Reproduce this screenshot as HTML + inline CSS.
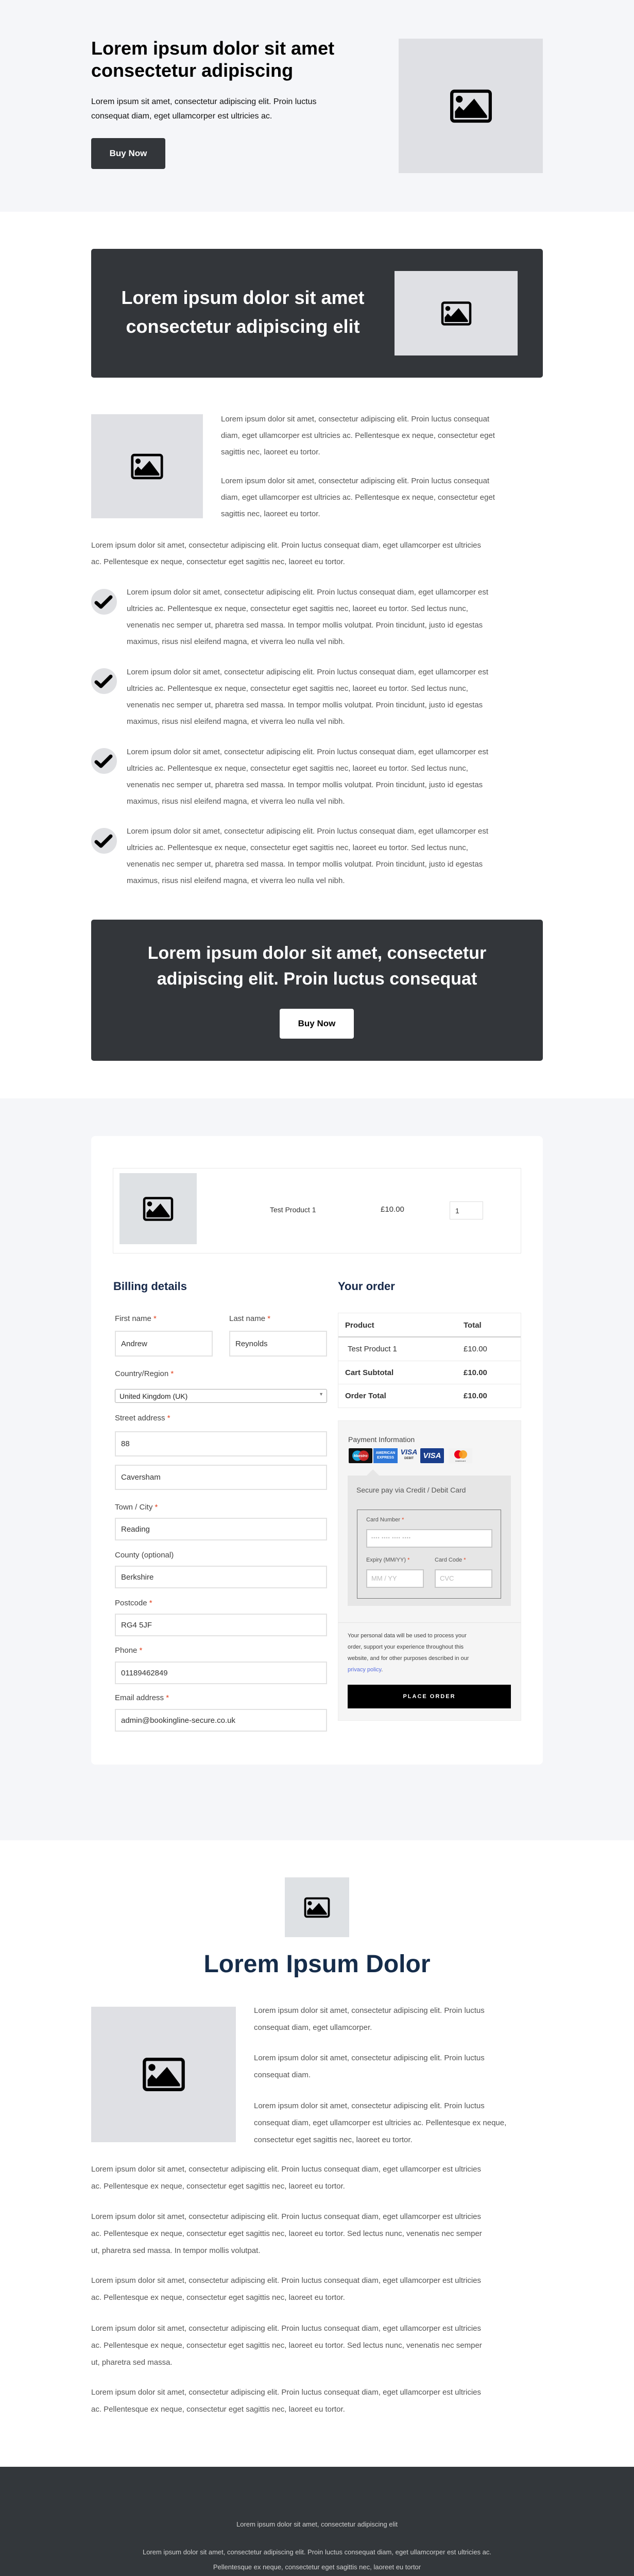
<!DOCTYPE html>
<html><head><meta charset="utf-8"><style>
*{margin:0;padding:0;box-sizing:border-box}
html{width:1231px;height:5262px;overflow:hidden}
body{width:1231px;height:5262px;position:relative;background:#fff;font-family:"Liberation Sans",sans-serif;color:#555;overflow:hidden}
.a{position:absolute}
.img{position:absolute;background:#dfe0e4;display:flex;align-items:center;justify-content:center}
.p{font-size:15px;line-height:32px;color:#555;white-space:nowrap}
.chk{position:absolute;left:177px;width:50px;height:50px;border-radius:50%;background:#dfe0e3}
.lbl{position:absolute;left:223px;font-size:15px;color:#444}
.lbl b,.sl b{color:#e2401c;font-weight:normal}
.inp{position:absolute;left:223px;width:412px;height:44px;border:2px solid #e2e2e2;background:#fff;font-size:15px;color:#333;padding:12px 10px}
.foot{position:absolute;left:0;width:1231px;text-align:center;font-size:13px;color:#d0d0d0}
.nav{color:#17294a}
</style></head><body>
<div class="a" style="left:0;top:0;width:1231px;height:411px;background:#f5f6f9"></div>
<div class="a" style="left:177px;top:72px;font-size:36px;line-height:43px;font-weight:bold;color:#000">Lorem ipsum dolor sit amet<br>consectetur adipiscing</div>
<div class="a" style="left:177px;top:184px;font-size:16px;line-height:28px;color:#111">Lorem ipsum sit amet, consectetur adipiscing elit. Proin luctus<br>consequat diam, eget ullamcorper est ultricies ac.</div>
<div class="a" style="left:177px;top:268px;width:144px;height:60px;background:#33363a;border-radius:4px;color:#fff;font-weight:bold;font-size:17px;line-height:60px;text-align:center">Buy Now</div>
<div class="img" style="left:774px;top:75px;width:280px;height:261px"><svg width="83" height="68" viewBox="0 0 40 32"><rect x="2" y="2" width="36" height="28" rx="2.5" fill="none" stroke="#000" stroke-width="3"/><circle cx="9" cy="9.5" r="3.2"/><path d="M5 27V21L9 16L13 20L23 9L35 25V27Z"/></svg></div>

<div class="a" style="left:177px;top:483px;width:877px;height:250px;background:#33363a;border-radius:5px"></div>
<div class="a" style="left:177px;top:550px;width:589px;text-align:center;font-size:36px;line-height:56px;font-weight:bold;color:#fff">Lorem ipsum dolor sit amet<br>consectetur adipiscing elit</div>
<div class="img" style="left:766px;top:526px;width:239px;height:164px"><svg width="60" height="49" viewBox="0 0 40 32"><rect x="2" y="2" width="36" height="28" rx="2.5" fill="none" stroke="#000" stroke-width="3"/><circle cx="9" cy="9.5" r="3.2"/><path d="M5 27V21L9 16L13 20L23 9L35 25V27Z"/></svg></div>

<div class="img" style="left:177px;top:804px;width:217px;height:202px"><svg width="65" height="51" viewBox="0 0 40 32"><rect x="2" y="2" width="36" height="28" rx="2.5" fill="none" stroke="#000" stroke-width="3"/><circle cx="9" cy="9.5" r="3.2"/><path d="M5 27V21L9 16L13 20L23 9L35 25V27Z"/></svg></div>
<div class="a p" style="left:429px;top:798px">Lorem ipsum dolor sit amet, consectetur adipiscing elit. Proin luctus consequat<br>diam, eget ullamcorper est ultricies ac. Pellentesque ex neque, consectetur eget<br>sagittis nec, laoreet eu tortor.</div>
<div class="a p" style="left:429px;top:918px">Lorem ipsum dolor sit amet, consectetur adipiscing elit. Proin luctus consequat<br>diam, eget ullamcorper est ultricies ac. Pellentesque ex neque, consectetur eget<br>sagittis nec, laoreet eu tortor.</div>
<div class="a p" style="left:177px;top:1043px">Lorem ipsum dolor sit amet, consectetur adipiscing elit. Proin luctus consequat diam, eget ullamcorper est ultricies<br>ac. Pellentesque ex neque, consectetur eget sagittis nec, laoreet eu tortor.</div>

<div class="chk" style="top:1143px"><svg width="50" height="50"><path d="M10 27L19 35L38 16" fill="none" stroke="#000" stroke-width="7" stroke-linecap="round" stroke-linejoin="round"/></svg></div>
<div class="a p" style="left:246px;top:1134px">Lorem ipsum dolor sit amet, consectetur adipiscing elit. Proin luctus consequat diam, eget ullamcorper est<br>ultricies ac. Pellentesque ex neque, consectetur eget sagittis nec, laoreet eu tortor. Sed lectus nunc,<br>venenatis nec semper ut, pharetra sed massa. In tempor mollis volutpat. Proin tincidunt, justo id egestas<br>maximus, risus nisl eleifend magna, et viverra leo nulla vel nibh.</div>
<div class="chk" style="top:1297px"><svg width="50" height="50"><path d="M10 27L19 35L38 16" fill="none" stroke="#000" stroke-width="7" stroke-linecap="round" stroke-linejoin="round"/></svg></div>
<div class="a p" style="left:246px;top:1289px">Lorem ipsum dolor sit amet, consectetur adipiscing elit. Proin luctus consequat diam, eget ullamcorper est<br>ultricies ac. Pellentesque ex neque, consectetur eget sagittis nec, laoreet eu tortor. Sed lectus nunc,<br>venenatis nec semper ut, pharetra sed massa. In tempor mollis volutpat. Proin tincidunt, justo id egestas<br>maximus, risus nisl eleifend magna, et viverra leo nulla vel nibh.</div>
<div class="chk" style="top:1452px"><svg width="50" height="50"><path d="M10 27L19 35L38 16" fill="none" stroke="#000" stroke-width="7" stroke-linecap="round" stroke-linejoin="round"/></svg></div>
<div class="a p" style="left:246px;top:1444px">Lorem ipsum dolor sit amet, consectetur adipiscing elit. Proin luctus consequat diam, eget ullamcorper est<br>ultricies ac. Pellentesque ex neque, consectetur eget sagittis nec, laoreet eu tortor. Sed lectus nunc,<br>venenatis nec semper ut, pharetra sed massa. In tempor mollis volutpat. Proin tincidunt, justo id egestas<br>maximus, risus nisl eleifend magna, et viverra leo nulla vel nibh.</div>
<div class="chk" style="top:1607px"><svg width="50" height="50"><path d="M10 27L19 35L38 16" fill="none" stroke="#000" stroke-width="7" stroke-linecap="round" stroke-linejoin="round"/></svg></div>
<div class="a p" style="left:246px;top:1598px">Lorem ipsum dolor sit amet, consectetur adipiscing elit. Proin luctus consequat diam, eget ullamcorper est<br>ultricies ac. Pellentesque ex neque, consectetur eget sagittis nec, laoreet eu tortor. Sed lectus nunc,<br>venenatis nec semper ut, pharetra sed massa. In tempor mollis volutpat. Proin tincidunt, justo id egestas<br>maximus, risus nisl eleifend magna, et viverra leo nulla vel nibh.</div>

<div class="a" style="left:177px;top:1785px;width:877px;height:274px;background:#33363a;border-radius:5px"></div>
<div class="a" style="left:177px;top:1825px;width:877px;text-align:center;font-size:34px;line-height:50px;font-weight:bold;color:#fff">Lorem ipsum dolor sit amet, consectetur<br>adipiscing elit. Proin luctus consequat</div>
<div class="a" style="left:543px;top:1958px;width:144px;height:58px;background:#fff;border-radius:4px;color:#000;font-weight:bold;font-size:17px;line-height:58px;text-align:center">Buy Now</div>

<div class="a" style="left:0;top:2132px;width:1231px;height:1440px;background:#f5f6f9"></div>
<div class="a" style="left:177px;top:2205px;width:877px;height:1220px;background:#fff;border-radius:8px"></div>
<div class="a" style="left:219px;top:2267px;width:793px;height:166px;border:1px solid #e8e8e8"></div>
<div class="img" style="left:232px;top:2277px;width:150px;height:138px;background:#dee1e4"><svg width="60" height="49" viewBox="0 0 40 32"><rect x="2" y="2" width="36" height="28" rx="2.5" fill="none" stroke="#000" stroke-width="3"/><circle cx="9" cy="9.5" r="3.2"/><path d="M5 27V21L9 16L13 20L23 9L35 25V27Z"/></svg></div>
<div class="a" style="left:524px;top:2340px;font-size:14px;color:#333">Test Product 1</div>
<div class="a" style="left:739px;top:2339px;font-size:15px;color:#333">£10.00</div>
<div class="a" style="left:873px;top:2332px;width:65px;height:35px;border:1px solid #ddd;font-size:14px;padding:9px 10px;color:#333">1</div>

<div class="a nav" style="left:220px;top:2484px;font-size:22px;font-weight:bold">Billing details</div>
<div class="a nav" style="left:656px;top:2484px;font-size:22px;font-weight:bold">Your order</div>

<div class="lbl" style="top:2551px">First name <b>*</b></div>
<div class="lbl" style="left:445px;top:2551px">Last name <b>*</b></div>
<div class="inp" style="top:2583px;width:190px;height:50px;padding:15px 10px">Andrew</div>
<div class="inp" style="left:445px;top:2583px;width:190px;height:50px;padding:15px 10px">Reynolds</div>
<div class="lbl" style="top:2658px">Country/Region <b>*</b></div>
<div class="a" style="left:223px;top:2696px;width:412px;height:27px;border:1px solid #aaa;border-radius:3px;font-size:14px;color:#222;padding:5px 8px">United Kingdom (UK)<span style="position:absolute;right:6px;top:4px;font-size:9px;color:#777">▼</span></div>
<div class="lbl" style="top:2744px">Street address <b>*</b></div>
<div class="inp" style="top:2778px;height:49px;padding:14px 10px">88</div>
<div class="inp" style="top:2843px;height:49px;padding:14px 10px">Caversham</div>
<div class="lbl" style="top:2917px">Town / City <b>*</b></div>
<div class="inp" style="top:2946px">Reading</div>
<div class="lbl" style="top:3010px">County (optional)</div>
<div class="inp" style="top:3039px">Berkshire</div>
<div class="lbl" style="top:3103px">Postcode <b>*</b></div>
<div class="inp" style="top:3132px">RG4 5JF</div>
<div class="lbl" style="top:3195px">Phone <b>*</b></div>
<div class="inp" style="top:3225px">01189462849</div>
<div class="lbl" style="top:3287px">Email address <b>*</b></div>
<div class="inp" style="top:3317px">admin@bookingline-secure.co.uk</div>

<div class="a" style="left:656px;top:2548px;width:356px;height:185px;border:1px solid #eaeaea;font-size:15px;color:#333">
 <div style="height:47px;border-bottom:2px solid #ccc;position:relative"><b style="position:absolute;left:13px;top:15px">Product</b><b style="position:absolute;left:243px;top:15px">Total</b></div>
 <div style="height:46px;border-bottom:1px solid #eaeaea;position:relative"><span style="position:absolute;left:18px;top:14px">Test Product 1</span><span style="position:absolute;left:243px;top:14px">£10.00</span></div>
 <div style="height:45px;border-bottom:1px solid #eaeaea;position:relative"><b style="position:absolute;left:13px;top:14px">Cart Subtotal</b><b style="position:absolute;left:243px;top:14px">£10.00</b></div>
 <div style="height:45px;position:relative"><b style="position:absolute;left:13px;top:14px">Order Total</b><b style="position:absolute;left:243px;top:14px">£10.00</b></div>
</div>

<div class="a" style="left:656px;top:2757px;width:356px;height:583px;background:#f5f5f5;border:1px solid #ececec"></div>
<div class="a" style="left:676px;top:2786px;font-size:14px;color:#444">Payment Information</div>
<div class="a" style="left:677px;top:2811px;width:46px;height:29px;background:#111;border-radius:2px"><svg width="46" height="29"><circle cx="17" cy="14.5" r="10" fill="#1ba0d7"/><circle cx="29" cy="14.5" r="10" fill="#e02b2b" opacity=".9"/><text x="23" y="17" font-size="7" fill="#fff" text-anchor="middle" font-family="Liberation Sans" font-style="italic" font-weight="bold">Maestro</text></svg></div>
<div class="a" style="left:725px;top:2811px;width:47px;height:29px;background:#2e77d8;color:#fff;font-size:7px;font-weight:bold;line-height:9px;text-align:center;padding-top:5px">AMERICAN<br>EXPRESS</div>
<div class="a" style="left:775px;top:2811px;width:38px;height:29px;color:#1a3e8c;font-size:14px;font-weight:bold;font-style:italic;text-align:center;line-height:15px">VISA<div style="font-size:6px;color:#333;line-height:10px;font-style:normal">DEBIT</div></div>
<div class="a" style="left:816px;top:2811px;width:46px;height:29px;background:#1a3e8c;color:#fff;font-size:15px;font-weight:bold;font-style:italic;text-align:center;line-height:29px;border-radius:2px">VISA</div>
<div class="a" style="left:871px;top:2811px;width:46px;height:29px;background:#f2f2f2"><svg width="46" height="29"><circle cx="19" cy="12" r="8" fill="#eb001b"/><circle cx="28" cy="12" r="8" fill="#f79e1b" opacity=".9"/><text x="23" y="26" font-size="4" fill="#333" text-anchor="middle" font-family="Liberation Sans">mastercard</text></svg></div>
<div class="a" style="left:675px;top:2864px;width:317px;height:253px;background:#e6e6e6"></div>
<div class="a" style="left:712px;top:2852px;width:0;height:0;border-left:12px solid transparent;border-right:12px solid transparent;border-bottom:12px solid #e6e6e6"></div>
<div class="a" style="left:692px;top:2884px;font-size:14px;color:#555">Secure pay via Credit / Debit Card</div>
<div class="a" style="left:693px;top:2930px;width:280px;height:173px;border:1px solid #777"></div>
<div class="a sl" style="left:711px;top:2944px;font-size:11px;color:#555">Card Number <b>*</b></div>
<div class="a" style="left:711px;top:2968px;width:245px;height:36px;background:#fff;border:2px solid #c8c8c8;font-size:9px;color:#bbb;padding:10px 8px;letter-spacing:1px">•••• •••• •••• ••••</div>
<div class="a sl" style="left:711px;top:3022px;font-size:11px;color:#555">Expiry (MM/YY) <b>*</b></div>
<div class="a sl" style="left:844px;top:3022px;font-size:11px;color:#555">Card Code <b>*</b></div>
<div class="a" style="left:711px;top:3046px;width:112px;height:36px;background:#fff;border:2px solid #c8c8c8;font-size:13px;color:#bbb;padding:8px 8px">MM / YY</div>
<div class="a" style="left:844px;top:3046px;width:112px;height:36px;background:#fff;border:2px solid #c8c8c8;font-size:13px;color:#bbb;padding:8px 8px">CVC</div>
<div class="a" style="left:657px;top:3149px;width:354px;height:1px;background:#e2e2e2"></div>
<div class="a" style="left:675px;top:3164px;font-size:11px;line-height:22px;color:#444">Your personal data will be used to process your<br>order, support your experience throughout this<br>website, and for other purposes described in our<br><span style="color:#5a6fe0">privacy policy</span>.</div>
<div class="a" style="left:675px;top:3270px;width:317px;height:46px;background:#000;color:#fff;font-size:11px;font-weight:bold;letter-spacing:2px;text-align:center;line-height:46px">PLACE ORDER</div>

<div class="img" style="left:553px;top:3644px;width:125px;height:116px;background:#dee1e4"><svg width="51" height="41" viewBox="0 0 40 32"><rect x="2" y="2" width="36" height="28" rx="2.5" fill="none" stroke="#000" stroke-width="3"/><circle cx="9" cy="9.5" r="3.2"/><path d="M5 27V21L9 16L13 20L23 9L35 25V27Z"/></svg></div>
<div class="a nav" style="left:0;top:3785px;width:1231px;text-align:center;font-size:48px;line-height:56px;font-weight:bold;color:#152c4a">Lorem Ipsum Dolor</div>
<div class="img" style="left:177px;top:3895px;width:281px;height:263px"><svg width="84" height="67" viewBox="0 0 40 32"><rect x="2" y="2" width="36" height="28" rx="2.5" fill="none" stroke="#000" stroke-width="3"/><circle cx="9" cy="9.5" r="3.2"/><path d="M5 27V21L9 16L13 20L23 9L35 25V27Z"/></svg></div>
<div class="a p" style="left:493px;top:3886px;line-height:33px">Lorem ipsum dolor sit amet, consectetur adipiscing elit. Proin luctus<br>consequat diam, eget ullamcorper.</div>
<div class="a p" style="left:493px;top:3978px;line-height:33px">Lorem ipsum dolor sit amet, consectetur adipiscing elit. Proin luctus<br>consequat diam.</div>
<div class="a p" style="left:493px;top:4071px;line-height:33px">Lorem ipsum dolor sit amet, consectetur adipiscing elit. Proin luctus<br>consequat diam, eget ullamcorper est ultricies ac. Pellentesque ex neque,<br>consectetur eget sagittis nec, laoreet eu tortor.</div>
<div class="a p" style="left:177px;top:4194px;line-height:33px">Lorem ipsum dolor sit amet, consectetur adipiscing elit. Proin luctus consequat diam, eget ullamcorper est ultricies<br>ac. Pellentesque ex neque, consectetur eget sagittis nec, laoreet eu tortor.</div>
<div class="a p" style="left:177px;top:4286px;line-height:33px">Lorem ipsum dolor sit amet, consectetur adipiscing elit. Proin luctus consequat diam, eget ullamcorper est ultricies<br>ac. Pellentesque ex neque, consectetur eget sagittis nec, laoreet eu tortor. Sed lectus nunc, venenatis nec semper<br>ut, pharetra sed massa. In tempor mollis volutpat.</div>
<div class="a p" style="left:177px;top:4410px;line-height:33px">Lorem ipsum dolor sit amet, consectetur adipiscing elit. Proin luctus consequat diam, eget ullamcorper est ultricies<br>ac. Pellentesque ex neque, consectetur eget sagittis nec, laoreet eu tortor.</div>
<div class="a p" style="left:177px;top:4503px;line-height:33px">Lorem ipsum dolor sit amet, consectetur adipiscing elit. Proin luctus consequat diam, eget ullamcorper est ultricies<br>ac. Pellentesque ex neque, consectetur eget sagittis nec, laoreet eu tortor. Sed lectus nunc, venenatis nec semper<br>ut, pharetra sed massa.</div>
<div class="a p" style="left:177px;top:4627px;line-height:33px">Lorem ipsum dolor sit amet, consectetur adipiscing elit. Proin luctus consequat diam, eget ullamcorper est ultricies<br>ac. Pellentesque ex neque, consectetur eget sagittis nec, laoreet eu tortor.</div>

<div class="a" style="left:0;top:4788px;width:1231px;height:474px;background:#33373b"></div>
<div class="foot" style="top:4892px">Lorem ipsum dolor sit amet, consectetur adipiscing elit</div>
<div class="foot" style="line-height:29px;top:4939px">Lorem ipsum dolor sit amet, consectetur adipiscing elit. Proin luctus consequat diam, eget ullamcorper est ultricies ac.<br>Pellentesque ex neque, consectetur eget sagittis nec, laoreet eu tortor</div>
<div class="foot" style="top:5026px">Lorem ipsum dolor sit amet, consectetur adipiscing elit</div>
<div class="foot" style="top:5079px">Lorem ipsum dolor</div>
<div class="a" style="left:0;top:5201px;width:1231px;height:1px;background:#474c51"></div>
<div class="foot" style="top:5225px;font-size:11px">@ Copyright. All Rights Reserved</div>
</body></html>
